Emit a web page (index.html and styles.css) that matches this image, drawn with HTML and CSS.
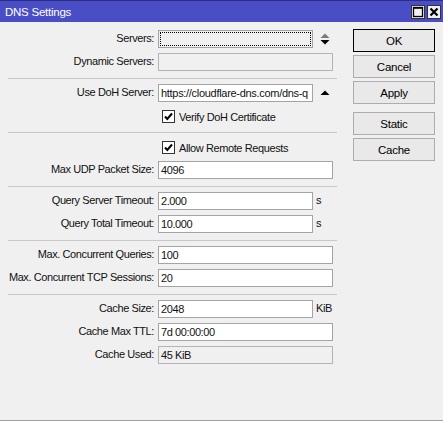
FILE: index.html
```html
<!DOCTYPE html>
<html>
<head>
<meta charset="utf-8">
<title>DNS Settings</title>
<link rel="stylesheet" href="styles.css">
</head>
<body>
<div class="window">
  <div class="titlebar">
    <span class="title">DNS Settings</span>
    <div class="tb-btns">
      <span class="tb-btn"><svg width="12" height="12" viewBox="0 0 12 12"><rect x="1.5" y="1.5" width="9" height="9" fill="none" stroke="#000" stroke-width="1.3"/><line x1="1" y1="2" x2="11" y2="2" stroke="#000" stroke-width="1.5"/></svg></span>
      <span class="tb-btn"><svg width="12" height="12" viewBox="0 0 12 12"><path d="M2.5 2.5 L9.5 9.5 M9.5 2.5 L2.5 9.5" stroke="#000" stroke-width="2.2" fill="none"/></svg></span>
    </div>
  </div>
  <div class="client">
    <div class="form">
      <div class="row">
        <span class="lbl">Servers:</span>
        <div class="field short focus"><span class="focus-ring"></span></div>
        <span class="spin"><svg width="10" height="12" viewBox="0 0 10 12"><path d="M5 0.5 L9.5 5 L0.5 5 Z" fill="#7a7a7a"/><path d="M0.5 7 L9.5 7 L5 11.5 Z" fill="#000"/></svg></span>
      </div>
      <div class="row">
        <span class="lbl">Dynamic Servers:</span>
        <div class="field disabled"></div>
      </div>
      <div class="sep"></div>
      <div class="row">
        <span class="lbl">Use DoH Server:</span>
        <div class="field short"><span class="clip">https://cloudflare-dns.com/dns-q</span></div>
        <span class="spin"><svg width="10" height="12" viewBox="0 0 10 12"><path d="M5 3.5 L9.5 8 L0.5 8 Z" fill="#000"/></svg></span>
      </div>
      <div class="row check">
        <span class="cb"><svg width="11" height="11" viewBox="0 0 11 11"><path d="M2 5.5 L4.3 8 L9 2.5" stroke="#000" stroke-width="2" fill="none"/></svg></span>
        <span>Verify DoH Certificate</span>
      </div>
      <div class="sep"></div>
      <div class="row check">
        <span class="cb"><svg width="11" height="11" viewBox="0 0 11 11"><path d="M2 5.5 L4.3 8 L9 2.5" stroke="#000" stroke-width="2" fill="none"/></svg></span>
        <span>Allow Remote Requests</span>
      </div>
      <div class="row">
        <span class="lbl">Max UDP Packet Size:</span>
        <div class="field">4096</div>
      </div>
      <div class="sep"></div>
      <div class="row">
        <span class="lbl">Query Server Timeout:</span>
        <div class="field short">2.000</div>
        <span class="unit">s</span>
      </div>
      <div class="row">
        <span class="lbl">Query Total Timeout:</span>
        <div class="field short">10.000</div>
        <span class="unit">s</span>
      </div>
      <div class="sep"></div>
      <div class="row">
        <span class="lbl">Max. Concurrent Queries:</span>
        <div class="field">100</div>
      </div>
      <div class="row">
        <span class="lbl">Max. Concurrent TCP Sessions:</span>
        <div class="field">20</div>
      </div>
      <div class="sep"></div>
      <div class="row">
        <span class="lbl">Cache Size:</span>
        <div class="field short">2048</div>
        <span class="unit">KiB</span>
      </div>
      <div class="row">
        <span class="lbl">Cache Max TTL:</span>
        <div class="field">7d 00:00:00</div>
      </div>
      <div class="row">
        <span class="lbl">Cache Used:</span>
        <div class="field disabled">45 KiB</div>
      </div>
    </div>
    <div class="actions">
      <button class="btn default">OK</button>
      <button class="btn">Cancel</button>
      <button class="btn">Apply</button>
      <button class="btn gap">Static</button>
      <button class="btn">Cache</button>
    </div>
  </div>
</div>
</body>
</html>
```

FILE: styles.css
```css
html, body {
  margin: 0;
  padding: 0;
  background: #f0f0f0;
}
.window {
  width: 443px;
  height: 421px;
  box-sizing: border-box;
  background: #f0f0f0;
  border-bottom: 1px solid #a0a0a0;
  display: flex;
  flex-direction: column;
  font-family: "Liberation Sans", Arial, sans-serif;
  font-size: 11px;
  letter-spacing: -0.4px;
  color: #111;
}
.titlebar {
  height: 22px;
  box-sizing: border-box;
  background: #4a4ec6;
  border-top: 1px solid #2a2d80;
  display: flex;
  align-items: center;
  justify-content: space-between;
  padding: 0 2px 0 5px;
}
.title {
  color: #fff;
  font-size: 11.5px;
  letter-spacing: -0.25px;
}
.tb-btns {
  display: flex;
  gap: 2px;
}
.tb-btn {
  width: 14px;
  height: 14px;
  box-sizing: border-box;
  border: 1px solid #333;
  background: #f0f0f0;
  display: flex;
  align-items: center;
  justify-content: center;
}
.client {
  flex: 1;
  display: flex;
}
.form {
  width: 353px;
  padding-top: 6px;
  display: flex;
  flex-direction: column;
}
.row {
  height: 23px;
  display: flex;
  align-items: flex-start;
}
.lbl {
  width: 158px;
  box-sizing: border-box;
  text-align: right;
  padding-right: 4px;
  padding-top: 4px;
  white-space: nowrap;
}
.field {
  margin-top: 2px;
  width: 175px;
  height: 18px;
  box-sizing: border-box;
  border: 1px solid #a4a4a4;
  background: #fff;
  padding: 2px 0 0 2px;
  white-space: nowrap;
  overflow: hidden;
  position: relative;
}
.clip {
  letter-spacing: -0.3px;
}
.field.short {
  width: 155px;
}
.field.disabled {
  background: #f0f0f0;
  border-color: #b4b4b4;
}
.field.focus {
  background: #f0f0f0;
}
.focus-ring {
  position: absolute;
  left: 1px;
  top: 1px;
  right: 1px;
  bottom: 1px;
  border: 1px dotted #000;
}
.spin {
  margin-left: 7px;
  margin-top: 5px;
  display: flex;
}
.unit {
  margin-left: 3px;
  padding-top: 4px;
}
.row.check {
  padding-left: 162px;
  align-items: center;
}
.cb {
  width: 13px;
  height: 13px;
  box-sizing: border-box;
  border: 1px solid #333;
  background: #fff;
  display: flex;
  align-items: center;
  justify-content: center;
  margin-right: 4px;
}
.sep {
  margin: 4px 0 3px 8px;
  width: 329px;
  height: 1px;
  background: #c8c8c8;
}
.actions {
  padding-top: 7px;
  display: flex;
  flex-direction: column;
  gap: 3px;
}
.btn {
  width: 82px;
  height: 23px;
  box-sizing: border-box;
  border: 1px solid #adadad;
  background: #e9e9e9;
  font-family: "Liberation Sans", Arial, sans-serif;
  font-size: 11.5px;
  letter-spacing: -0.25px;
  color: #000;
  padding: 0;
  margin: 0;
}
.btn.default {
  border-color: #000;
}
.btn.gap {
  margin-top: 5px;
}
```
